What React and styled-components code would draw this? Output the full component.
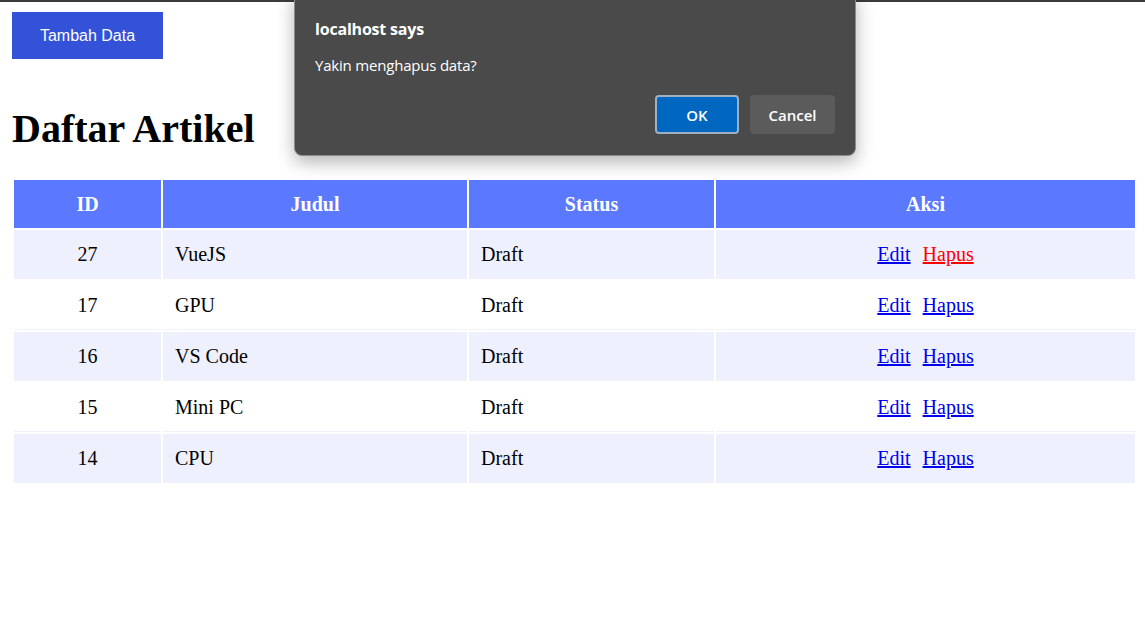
import React from "react";
import styled, { createGlobalStyle } from "styled-components";

const articles = [
  { id: 27, title: "VueJS", status: "Draft" },
  { id: 17, title: "GPU", status: "Draft" },
  { id: 16, title: "VS Code", status: "Draft" },
  { id: 15, title: "Mini PC", status: "Draft" },
  { id: 14, title: "CPU", status: "Draft" },
];

function App() {
  return (
    <>
      <GlobalStyle />
      <TopBar />
      <Page>
        <AddBtn>Tambah Data</AddBtn>
        <Title>Daftar Artikel</Title>
        <Table>
          <colgroup>
            <col style={{ width: 147 }} />
            <col style={{ width: 304 }} />
            <col style={{ width: 245 }} />
            <col />
          </colgroup>
          <thead>
            <tr>
              <Th>ID</Th>
              <Th>Judul</Th>
              <Th>Status</Th>
              <Th>Aksi</Th>
            </tr>
          </thead>
          <tbody>
            {articles.map((item, i) => (
              <Row key={item.id} $odd={i % 2 === 0}>
                <Td $center>{item.id}</Td>
                <Td>{item.title}</Td>
                <Td>{item.status}</Td>
                <Td $center>
                  <Actions>
                    <Link href="#">Edit</Link>
                    <Link href="#" $active={i === 0}>
                      Hapus
                    </Link>
                  </Actions>
                </Td>
              </Row>
            ))}
          </tbody>
        </Table>
      </Page>

      <Dialog>
        <DialogTitle>localhost says</DialogTitle>
        <DialogText>Yakin menghapus data?</DialogText>
        <DialogButtons>
          <DialogBtn $primary>OK</DialogBtn>
          <DialogBtn>Cancel</DialogBtn>
        </DialogButtons>
      </Dialog>
    </>
  );
}
export default App;

const GlobalStyle = createGlobalStyle`
  body {
    margin: 0;
    background: #fff;
    font-family: "Liberation Serif", "Times New Roman", serif;
  }
`;

const TopBar = styled.div`
  height: 2px;
  background: #3b3b3b;
`;

const Page = styled.div`
  padding: 10px 8px 0 12px;
`;

const AddBtn = styled.button`
  width: 151px;
  height: 47px;
  border: none;
  background: #3352d8;
  color: #fff;
  font-family: "Liberation Sans", Arial, sans-serif;
  font-size: 16px;
  cursor: pointer;
`;

const Title = styled.h1`
  margin: 47px 0 26px;
  font-size: 40px;
  font-weight: bold;
  line-height: 46px;
`;

const Table = styled.table`
  width: 100%;
  border-collapse: separate;
  border-spacing: 2px;
  table-layout: fixed;
  font-size: 20px;
`;

const Th = styled.th`
  height: 48px;
  padding: 0 12px;
  background: #5a79ff;
  color: #fff;
  font-weight: bold;
  text-align: center;
`;

const Row = styled.tr`
  background: ${(p) => (p.$odd ? "#eef0fd" : "#fff")};
`;

const Td = styled.td`
  height: 48px;
  padding: 0 12px;
  border-bottom: 1px solid #eef0fb;
  text-align: ${(p) => (p.$center ? "center" : "left")};
  color: #000;
`;

const Actions = styled.div`
  display: flex;
  justify-content: center;
  gap: 12px;
`;

const Link = styled.a`
  color: ${(p) => (p.$active ? "#ff0000" : "#0000ee")};
  text-decoration: underline;
`;

const Dialog = styled.div`
  position: absolute;
  top: -8px;
  left: 294px;
  width: 562px;
  box-sizing: border-box;
  padding: 37px 20px 21px 20px;
  background: #4a4a4a;
  border: 1px solid #8c8c8c;
  border-radius: 8px;
  box-shadow: 0 6px 18px rgba(0, 0, 0, 0.3);
  font-family: "Open Sans", "Noto Sans", sans-serif;
  color: #fff;
`;

const DialogTitle = styled.div`
  font-size: 16px;
  font-weight: 700;
  line-height: 20px;
  margin-top: -11px;
  letter-spacing: -0.2px;
`;

const DialogText = styled.div`
  font-size: 15px;
  line-height: 20px;
  margin-top: 16px;
  letter-spacing: -0.2px;
`;

const DialogButtons = styled.div`
  display: flex;
  justify-content: flex-end;
  gap: 11px;
  margin-top: 20px;
`;

const DialogBtn = styled.button`
  width: ${(p) => (p.$primary ? "84px" : "85px")};
  height: 39px;
  box-sizing: border-box;
  border-radius: 4px;
  border: ${(p) => (p.$primary ? "2px solid #9fb0c3" : "none")};
  background: ${(p) => (p.$primary ? "#0067c0" : "#5b5b5b")};
  color: #fff;
  font-family: "Open Sans", "Noto Sans", sans-serif;
  font-size: 15px;
  font-weight: 600;
`;
